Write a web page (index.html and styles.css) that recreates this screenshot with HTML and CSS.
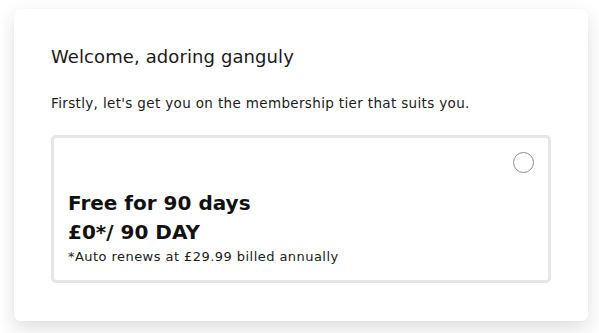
FILE: index.html
```html
<!DOCTYPE html>
<html lang="en">
<head>
<meta charset="utf-8">
<title>Membership</title>
<link rel="stylesheet" href="styles.css">
</head>
<body>
<main class="card">
  <h1 class="title">Welcome, adoring ganguly</h1>
  <p class="intro">Firstly, let's get you on the membership tier that suits you.</p>
  <label class="option">
    <span class="option-top"><span class="radio"></span></span>
    <span class="plan-name">Free for 90 days</span>
    <span class="plan-price">£0*/ 90 DAY</span>
    <span class="plan-note">*Auto renews at £29.99 billed annually</span>
  </label>
</main>
</body>
</html>
```
FILE: styles.css
```css
html, body {
  margin: 0;
  padding: 0;
  background: #ffffff;
}
body {
  width: 599px;
  height: 333px;
  overflow: hidden;
  font-family: "DejaVu Sans", "Liberation Sans", sans-serif;
  color: #1a1a1a;
}
.card {
  box-sizing: border-box;
  margin: 9px 11px 0 14px;
  height: 312px;
  padding: 37px 37px 0 37px;
  background: #ffffff;
  border-radius: 6px;
  box-shadow: 0 8px 20px rgba(0, 0, 0, 0.13), 0 0 1px rgba(0, 0, 0, 0.08);
  display: flex;
  flex-direction: column;
}
.title {
  margin: 0;
  font-size: 18px;
  line-height: 22px;
  font-weight: 400;
  letter-spacing: 0.1px;
}
.intro {
  margin: 26px 0 0 0;
  font-size: 13.5px;
  line-height: 18px;
  letter-spacing: 0.35px;
}
.option {
  box-sizing: border-box;
  margin-top: 23px;
  height: 148px;
  border: 3px solid #e5e5ea;
  border-radius: 5px;
  padding: 14px 14px 14px 14px;
  display: flex;
  flex-direction: column;
}
.option-top {
  display: flex;
  justify-content: flex-end;
  margin-bottom: 16px;
}
.radio {
  box-sizing: border-box;
  width: 21px;
  height: 21px;
  border: 1px solid #8c8c8c;
  border-radius: 50%;
}
.plan-name, .plan-price {
  font-size: 20px;
  line-height: 29px;
  font-weight: 700;
  color: #111111;
}
.plan-note {
  font-size: 13px;
  line-height: 20px;
  letter-spacing: 0.45px;
}
```
